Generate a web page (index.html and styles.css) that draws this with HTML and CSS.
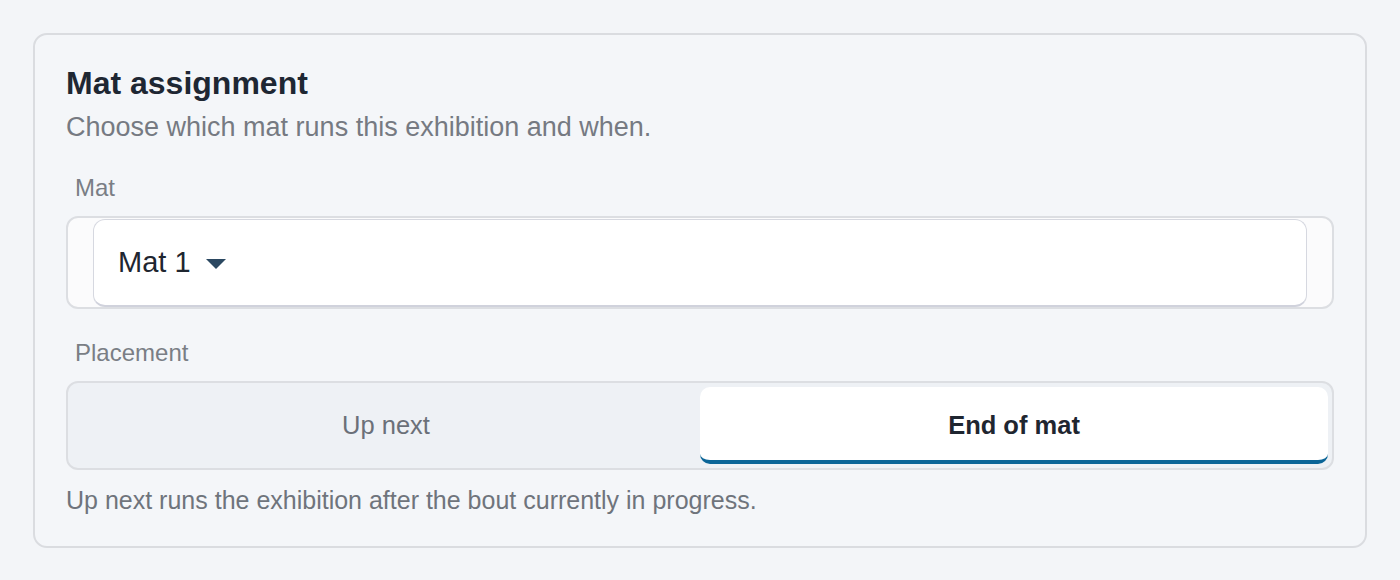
FILE: index.html
```html
<!DOCTYPE html>
<html lang="en">
<head>
    <meta charset="UTF-8">
    <meta name="viewport" content="width=device-width, initial-scale=1.0">
    <title>Mat assignment</title>
    <link rel="stylesheet" href="styles.css">
</head>
<body>
    <div class="card">
        <h1>Mat assignment</h1>
        <p class="subtitle">Choose which mat runs this exhibition and when.</p>

        <div class="field">
            <label class="field-label">Mat</label>
            <div class="select-wrap">
                <div class="select">
                    <span>Mat 1</span>
                    <svg class="caret" width="20" height="10" viewBox="0 0 20 10"><path d="M0 0h20L10 10z" fill="#2b4861"/></svg>
                </div>
            </div>
        </div>

        <div class="field">
            <label class="field-label">Placement</label>
            <div class="segmented">
                <button type="button" class="segment">Up next</button>
                <button type="button" class="segment active">End of mat</button>
            </div>
        </div>

        <p class="hint">Up next runs the exhibition after the bout currently in progress.</p>
    </div>
</body>
</html>
```

FILE: styles.css
```css
body {
    font-family: "Liberation Sans", Arial, sans-serif;
    background-color: #f3f5f8;
    margin: 0;
    padding: 33px;
}
.card {
    border: 2px solid #dadce0;
    border-radius: 14px;
    background: #f4f6f9;
    padding: 30px 31px 31px;
}
h1 {
    margin: 0;
    font-size: 32px;
    line-height: 36px;
    color: #1e2733;
}
.subtitle {
    margin: 10px 0 0;
    font-size: 27px;
    line-height: 32px;
    color: #767a82;
}
.field {
    margin-top: 31px;
}
.field + .field {
    margin-top: 30px;
}
.field-label {
    display: block;
    padding-left: 9px;
    font-size: 24px;
    line-height: 28px;
    color: #7a7e85;
    margin-bottom: 14px;
}
.select-wrap {
    border: 2px solid #dcdee2;
    border-radius: 12px;
    background: #fbfbfc;
    padding: 1px 25px 0;
}
.select {
    display: flex;
    align-items: center;
    gap: 15px;
    height: 88px;
    box-sizing: border-box;
    background: white;
    border: 1.5px solid #d6d8e0;
    border-bottom: 2px solid #d0d2dc;
    border-radius: 12px;
    padding: 0 0 0 24px;
    font-size: 29px;
    color: #1f2630;
}
.caret {
    margin-top: 2px;
}
.segmented {
    display: grid;
    grid-template-columns: 1fr 1fr;
    border: 2px solid #dcdee2;
    border-radius: 12px;
    background: #eef1f5;
    padding: 4px;
}
.segment {
    height: 77px;
    border: none;
    background: transparent;
    font-family: inherit;
    font-size: 25.5px;
    color: #6b7079;
    cursor: pointer;
    border-radius: 10px;
}
.segment.active {
    background: white;
    color: #1f2630;
    font-weight: bold;
    border-bottom: 4px solid #0b6597;
    padding-top: 4px;
}
.hint {
    margin: 15px 0 0;
    font-size: 25px;
    line-height: 30px;
    color: #6f747c;
}
```
